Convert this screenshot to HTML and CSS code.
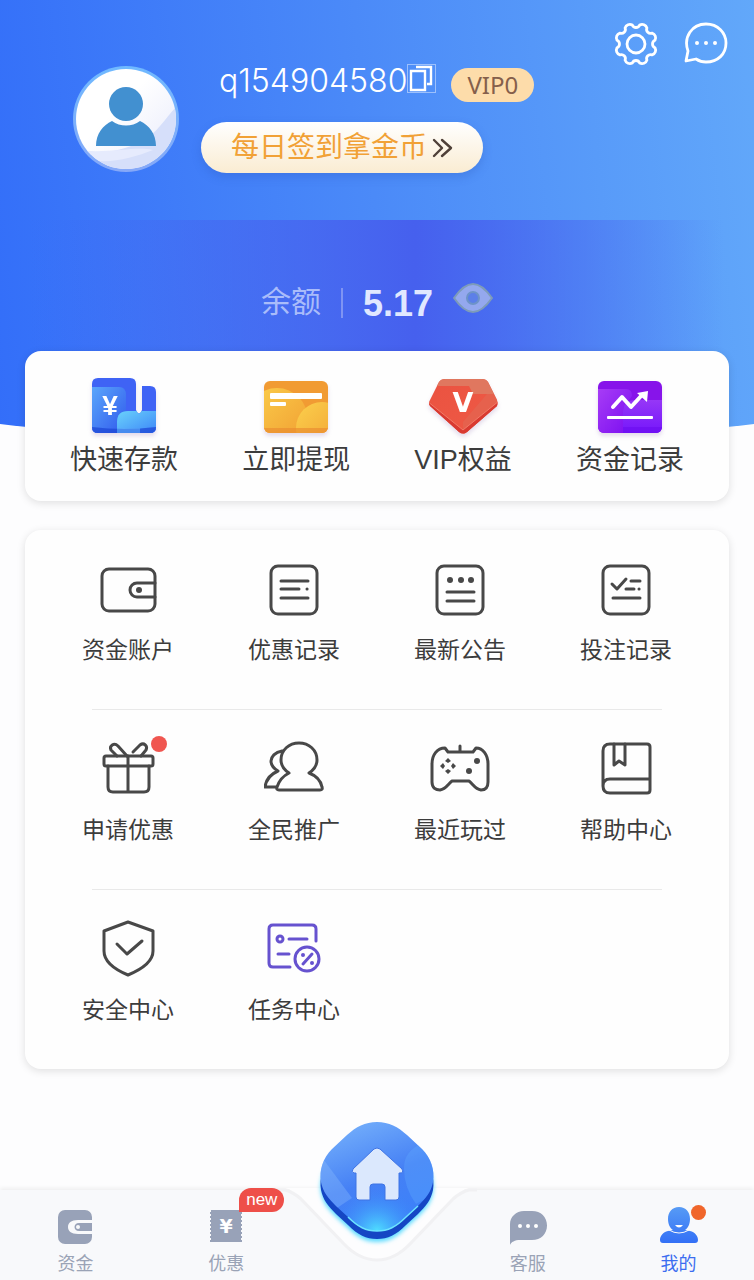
FILE: index.html
```html
<!DOCTYPE html>
<html lang="zh-CN">
<head>
    <meta charset="UTF-8">
    <meta name="viewport" content="width=device-width, initial-scale=1.0">
    <title>我的</title>
    <link rel="stylesheet" href="styles.css">
</head>
<body>
    <header class="header">
        <div class="profile">
            <svg class="avatar" viewBox="0 0 106 106" aria-hidden="true">
                <defs>
                    <linearGradient id="ring" x1="0" y1="0" x2="0" y2="1">
                        <stop offset="0" stop-color="#6fb9ff"/>
                        <stop offset="1" stop-color="#86a8f8"/>
                    </linearGradient>
                    <linearGradient id="face" x1="0" y1="0" x2="1" y2="1">
                        <stop offset="0.4" stop-color="#fff"/>
                        <stop offset="1" stop-color="#e6e9fb"/>
                    </linearGradient>
                    <clipPath id="round"><circle cx="53" cy="53" r="50"/></clipPath>
                </defs>
                <circle cx="53" cy="53" r="53" fill="url(#ring)"/>
                <circle cx="53" cy="53" r="50" fill="url(#face)"/>
                <g clip-path="url(#round)">
                    <path d="M0 84C30 90 50 84 68 76C86 66 92 52 106 38V106H0Z" fill="#d6dffa"/>
                    <path d="M0 84C40 88 60 80 80 84C60 92 30 100 14 92Z" fill="#e6ebfd"/>
                </g>
                <circle cx="53" cy="38" r="17" fill="#4290d0"/>
                <path d="M23 80C23 68 30 59 39 55C47 61 59 61 67 55C76 59 83 68 83 80Z" fill="#4290d0"/>
            </svg>
            <div class="info">
                <div class="user">
                    <span class="user-name">q154904580</span>
                    <button class="icon-btn" type="button" aria-label="复制">
                        <svg width="29" height="29" viewBox="0 0 29 29" fill="none" stroke="#fff">
                            <rect x="0.5" y="0.5" width="28" height="28" stroke="#9cc0fc"/>
                            <path d="M4 7H18V26H4ZM9 3H24V20H20" stroke-width="2.4"/>
                        </svg>
                    </button>
                    <span class="vip">VIP0</span>
                </div>
                <a class="sign" href="#">每日签到拿金币<svg width="22" height="22" viewBox="0 0 22 22" fill="none" stroke="#4f4038" stroke-width="2.4" stroke-linecap="round" stroke-linejoin="round"><path d="M3 3L11 11L3 19M11 3L20 11L11 19"/></svg></a>
            </div>
            <div class="actions">
                <button class="icon-btn" type="button" aria-label="设置">
                    <svg width="44" height="44" viewBox="-22 -22 44 44" fill="none" stroke="#fff" stroke-width="2.8" stroke-linejoin="round">
                        <path d="M19 3.7A5 5 0 0 1 16.1 10.9A4 4 0 0 0 10.9 16.1A5 5 0 0 1 3.7 19A4 4 0 0 0 -3.7 19A5 5 0 0 1 -10.9 16.1A4 4 0 0 0 -16.1 10.9A5 5 0 0 1 -19 3.7A4 4 0 0 0 -19 -3.7A5 5 0 0 1 -16.1 -10.9A4 4 0 0 0 -10.9 -16.1A5 5 0 0 1 -3.7 -19A4 4 0 0 0 3.7 -19A5 5 0 0 1 10.9 -16.1A4 4 0 0 0 16.1 -10.9A5 5 0 0 1 19 -3.7A4 4 0 0 0 19 3.7Z"/>
                        <circle r="9"/>
                    </svg>
                </button>
                <button class="icon-btn" type="button" aria-label="消息">
                    <svg width="44" height="44" viewBox="0 0 44 44" fill="none" stroke="#fff" stroke-width="2.8" stroke-linejoin="round">
                        <path d="M4 29C-1 15 8 2 22 2C34 2 42 11 42 21C42 32 34 40 22 40C18 40 15 39 12 37L2 39Z"/>
                        <g fill="#fff" stroke="none"><circle cx="13" cy="21" r="2"/><circle cx="22" cy="21" r="2"/><circle cx="31" cy="21" r="2"/></g>
                    </svg>
                </button>
            </div>
        </div>
        <div class="balance">
            <span class="balance-label">余额</span>
            <span class="balance-line"></span>
            <span class="balance-value">5.17</span>
            <button class="icon-btn eye" type="button" aria-label="显示余额">
                <svg width="40" height="30" viewBox="0 0 40 30">
                    <path d="M1 15C8 5 14 1 20 1S32 5 39 15C32 25 26 29 20 29S8 25 1 15Z" fill="#94a8ee" stroke="#7d9bb9" stroke-width="2"/>
                    <circle cx="20" cy="15" r="6" fill="#5c7fe8" stroke="#6d93c8" stroke-width="2"/>
                </svg>
            </button>
        </div>
    </header>

    <main>
        <nav class="card quick">
            <a class="quick-item" href="#">
                <svg width="72" height="64" viewBox="0 0 72 64">
                    <defs>
                        <linearGradient id="dep1" x1="0" y1="0" x2="1" y2="1"><stop offset="0" stop-color="#5aa6fb"/><stop offset="1" stop-color="#3058ec"/></linearGradient>
                        <linearGradient id="dep2" x1="0" y1="0" x2="1" y2="1"><stop offset="0" stop-color="#6ad2fb"/><stop offset="1" stop-color="#3b82f8"/></linearGradient>
                        <clipPath id="depc"><path d="M10 4H42Q48 4 48 10V36Q51 43 54 36V12H62Q68 12 68 18V53Q68 59 62 59H10Q4 59 4 53V10Q4 4 10 4Z"/></clipPath>
                    </defs>
                    <g clip-path="url(#depc)">
                        <rect width="72" height="64" fill="#3f63f5"/>
                        <path d="M4 13H31Q38 13 38 21V60H4Z" fill="url(#dep1)"/>
                        <path d="M29 60V48Q29 37 40 37H70V60Z" fill="url(#dep2)"/>
                        <path d="M4 53Q36 57 68 53V60H4Z" fill="#1d47d6" opacity="0.75"/>
                        <path d="M29 54H52V60H29Z" fill="#5aa8fa" opacity="0.6"/>
                    </g>
                    <text class="glyph yen" x="22" y="41">¥</text>
                </svg>
                快速存款
            </a>
            <a class="quick-item" href="#">
                <svg width="72" height="64" viewBox="0 0 72 64">
                    <defs>
                        <linearGradient id="car1" x1="0" y1="0" x2="1" y2="1"><stop offset="0" stop-color="#fbd04c"/><stop offset="1" stop-color="#f09a30"/></linearGradient>
                        <clipPath id="carc"><rect x="4" y="7" width="64" height="52" rx="6"/></clipPath>
                    </defs>
                    <g clip-path="url(#carc)">
                        <rect width="72" height="64" fill="#f19b33"/>
                        <ellipse cx="17" cy="46" rx="31" ry="32" fill="url(#car1)"/>
                        <circle cx="62" cy="54" r="26" fill="url(#car1)"/>
                        <path d="M4 54H68V60H4Z" fill="#ea8a30" opacity="0.65"/>
                    </g>
                    <rect x="10" y="19" width="52" height="6" rx="1" fill="#fff"/>
                    <rect x="10" y="28" width="16" height="4" rx="1" fill="#fff"/>
                </svg>
                立即提现
            </a>
            <a class="quick-item" href="#">
                <svg width="72" height="64" viewBox="0 0 72 64">
                    <defs>
                        <linearGradient id="gem1" x1="0" y1="0" x2="1" y2="1"><stop offset="0" stop-color="#ea5240"/><stop offset="1" stop-color="#ef5a46"/></linearGradient>
                        <clipPath id="gemc"><path d="M18 5H55Q59 5 61 8L70 26Q71 29 70 32L40 58Q36 61 32 58L3 32Q1 29 3 26L12 8Q14 5 18 5Z"/></clipPath>
                    </defs>
                    <g clip-path="url(#gemc)">
                        <rect width="72" height="64" fill="url(#gem1)"/>
                        <path d="M10 4H64L70 20H46L42 12H8Z" fill="#e0775f"/>
                        <path d="M36 48L60 20H70V32L36 62Z" fill="#e46450" opacity="0.8"/>
                        <path d="M0 27L36 56L72 27V64H0Z" fill="#d93a31"/>
                        <path d="M0 27L36 56L72 27" fill="none" stroke="#f27a68"/>
                    </g>
                    <text class="glyph gem" x="36" y="38">V</text>
                </svg>
                VIP权益
            </a>
            <a class="quick-item" href="#">
                <svg width="72" height="64" viewBox="0 0 72 64">
                    <defs>
                        <linearGradient id="rec1" x1="0" y1="0" x2="1" y2="1"><stop offset="0" stop-color="#a73cf6"/><stop offset="1" stop-color="#7a0df0"/></linearGradient>
                        <linearGradient id="rec2" x1="0" y1="0" x2="0" y2="1"><stop offset="0" stop-color="#9637f7"/><stop offset="1" stop-color="#7415fb"/></linearGradient>
                        <clipPath id="recc"><rect x="4" y="7" width="64" height="52" rx="6"/></clipPath>
                    </defs>
                    <g clip-path="url(#recc)">
                        <rect width="72" height="64" fill="#8714ea"/>
                        <path d="M4 15H32Q38 15 38 22L29 34V60H4Z" fill="url(#rec1)"/>
                        <path d="M29 60V38Q29 26 42 26H70V60Z" fill="url(#rec2)"/>
                        <path d="M29 53H68V60H29Z" fill="#6d0cf0" opacity="0.6"/>
                    </g>
                    <path d="M19 33L28 23L37 33L48 21" fill="none" stroke="#fff" stroke-width="4" stroke-linecap="round" stroke-linejoin="round"/>
                    <path d="M43 19L54 17L53 28Z" fill="#fff"/>
                    <rect x="13" y="42" width="46" height="3" rx="1" fill="#fff"/>
                </svg>
                资金记录
            </a>
        </nav>

        <nav class="card menu">
            <div class="menu-row">
                <a class="menu-item" href="#">
                    <svg class="line-icon" viewBox="0 0 60 60">
                        <rect x="4" y="9" width="53" height="42" rx="7"/>
                        <path d="M57 23H39A7 7 0 0 0 39 37H57"/>
                        <circle class="dot" cx="41" cy="30" r="3"/>
                    </svg>
                    资金账户
                </a>
                <a class="menu-item" href="#">
                    <svg class="line-icon" viewBox="0 0 60 60">
                        <rect x="7" y="6" width="46" height="48" rx="7"/>
                        <path d="M17 21H44M17 29H35M43 29H43.1M17 38H44"/>
                    </svg>
                    优惠记录
                </a>
                <a class="menu-item" href="#">
                    <svg class="line-icon" viewBox="0 0 60 60">
                        <rect x="7" y="6" width="46" height="48" rx="7"/>
                        <path d="M17 32H44M17 41H44"/>
                        <circle class="dot" cx="20" cy="20" r="3"/>
                        <circle class="dot" cx="31" cy="20" r="3"/>
                        <circle class="dot" cx="41" cy="20" r="3"/>
                    </svg>
                    最新公告
                </a>
                <a class="menu-item" href="#">
                    <svg class="line-icon" viewBox="0 0 60 60">
                        <rect x="7" y="6" width="46" height="48" rx="7"/>
                        <path d="M16 24L21 29L30 19M35 21H44M30 29H38M43 29H43.1M17 38H44"/>
                    </svg>
                    投注记录
                </a>
            </div>
            <hr class="menu-line">
            <div class="menu-row">
                <a class="menu-item" href="#">
                    <svg class="line-icon" viewBox="0 0 60 60">
                        <rect x="6" y="16" width="49" height="10" rx="2"/>
                        <path d="M10 26V47Q10 52 15 52H46Q51 52 51 47V26M30 16V52"/>
                        <path d="M29 16L20 6C16 2 11 6 13 10L19 16M35 12L42 5C46 2 50 6 48 10L43 16"/>
                    </svg>
                    <i class="menu-dot"></i>
                    申请优惠
                </a>
                <a class="menu-item" href="#">
                    <svg class="line-icon" viewBox="0 0 60 60">
                        <path d="M25 33C19 29 17 25 17 20C17 10 25 3 35 3S53 10 53 20C53 25 51 29 45 33C53 36 57 42 58 47Q59 50 56 50H15Q12 50 13 47C15 41 19 36 25 33Z"/>
                        <path d="M18 11C11 12 7 17 7 21C7 25 9 28 14 31C7 34 2 40 1 47H12"/>
                    </svg>
                    全民推广
                </a>
                <a class="menu-item" href="#">
                    <svg class="line-icon" viewBox="0 0 60 60">
                        <path d="M18 12L15 8C7 8 2 15 2 24V42C2 48 6 50 10 50C16 49 18 44 22 41H39C43 44 45 49 51 50C55 50 58 48 58 42V24C58 15 53 8 46 8L43 12ZM30 6V12"/>
                        <g class="dot"><path d="M18 18L21 21L18 23L15 21ZM18 34L21 31L18 29L15 31ZM10 26L13 23L15 26L13 29ZM26 26L23 23L21 26L23 29Z"/><circle cx="47" cy="21" r="3"/><circle cx="39" cy="31" r="3"/></g>
                    </svg>
                    最近玩过
                </a>
                <a class="menu-item" href="#">
                    <svg class="line-icon" viewBox="0 0 60 60">
                        <path d="M7 46V11Q7 4 14 4H51Q54 4 54 7V50Q54 53 51 53H14Q7 53 7 46Q7 39 14 39H54"/>
                        <path d="M18 4V25L23 21L29 25V4"/>
                    </svg>
                    帮助中心
                </a>
            </div>
            <hr class="menu-line">
            <div class="menu-row">
                <a class="menu-item" href="#">
                    <svg class="line-icon" viewBox="0 0 60 60">
                        <path d="M30 2L55 11V31C55 42 42 50 30 55C18 50 6 42 6 31V11Z"/>
                        <path d="M19 24L29 34L44 21"/>
                    </svg>
                    安全中心
                </a>
                <a class="menu-item" href="#">
                    <svg class="line-icon task" viewBox="0 0 60 60">
                        <path d="M52 21V9Q52 5 48 5H9Q5 5 5 9V43Q5 47 9 47H26M25 19H43M14 34H25M39 44L48 34"/>
                        <circle cx="16" cy="19" r="3"/>
                        <circle cx="43" cy="39" r="12"/>
                        <circle class="dot" cx="39" cy="35" r="2"/>
                        <circle class="dot" cx="48" cy="43" r="2"/>
                    </svg>
                    任务中心
                </a>
            </div>
        </nav>
    </main>

    <nav class="tabbar">
        <svg class="notch" width="200" height="80" viewBox="0 0 200 80">
            <path d="M0 0H8Q16 2 24 9L66 53Q82 72 100 72T134 53L176 9Q184 2 192 0H200Z" fill="#fdfdfe"/>
            <path d="M0 2H8Q16 4 24 11L66 55Q82 72 100 72T134 55L176 11Q184 4 192 2H200" fill="none" stroke="#f1f1f3" stroke-width="3"/>
        </svg>
        <a class="tab" href="#">
            <svg width="40" height="40" viewBox="0 0 40 40">
                <rect x="3" y="4" width="34" height="34" rx="7" fill="#98a2b8"/>
                <path d="M38 14H23C16 14 13 17 13 21S16 28 23 28H38V25H24C18 25 18 17 24 17H38Z" fill="#f8f9fb"/>
                <circle cx="23" cy="21" r="2" fill="#f8f9fb"/>
            </svg>
            资金
        </a>
        <a class="tab" href="#">
            <svg width="40" height="40" viewBox="0 0 40 40">
                <rect x="4" y="4" width="32" height="32" fill="#98a2b8"/>
                <path d="M4 4V36M36 4V36" stroke="#f8f9fb" stroke-width="2" stroke-dasharray="2 2"/>
                <text class="glyph coupon" x="20" y="27">¥</text>
            </svg>
            <span class="new">new</span>
            优惠
        </a>
        <a class="tab home" href="#" aria-label="首页">
            <svg width="130" height="136" viewBox="0 0 130 136">
                <defs>
                    <linearGradient id="home1" x1="0.2" y1="0" x2="0.6" y2="1">
                        <stop offset="0" stop-color="#75b0fb"/>
                        <stop offset="0.55" stop-color="#4580f5"/>
                        <stop offset="1" stop-color="#3b82fa"/>
                    </linearGradient>
                    <radialGradient id="home2" cx="0.5" cy="1" r="0.4">
                        <stop offset="0" stop-color="#4fe0ff"/>
                        <stop offset="1" stop-color="#3b82fa" stop-opacity="0"/>
                    </radialGradient>
                    <filter id="glow" x="-20%" y="-20%" width="140%" height="140%"><feGaussianBlur stdDeviation="2"/></filter>
                    <path id="base" d="M65 8C53 8 44 13 35 21L20 35C11 44 7 56 9 68C11 78 16 84 24 92L36 103C46 113 54 117 65 117S84 113 94 103L106 92C114 84 119 78 121 68C123 56 119 44 110 35L95 21C86 13 77 8 65 8Z"/>
                    <clipPath id="homec"><use href="#base"/></clipPath>
                </defs>
                <use href="#base" y="11" fill="#5fdcff" filter="url(#glow)"/>
                <use href="#base" y="8" fill="#1546c4"/>
                <use href="#base" fill="url(#home1)"/>
                <g clip-path="url(#homec)">
                    <path d="M0 30L40 84L22 96L0 80Z" fill="#8bbcfb" opacity="0.35"/>
                    <path d="M92 54C92 42 98 36 108 30L130 54V76L104 90Q92 74 92 54Z" fill="#62b0ff" opacity="0.3"/>
                    <use href="#base" fill="url(#home2)"/>
                </g>
                <path d="M36 103C46 113 54 117 65 117S84 113 94 103L106 92" fill="none" stroke="#6ce4ff" stroke-width="1.5"/>
                <path d="M62 35Q65 33 68 35L90 55Q92 59 88 59H87V83Q87 86 84 86H73V73Q73 70 70 70H61Q58 70 58 73V86H47Q44 86 44 83V59H42Q39 58 41 55Z" fill="#dbe8fd" stroke="#3f74e4" stroke-width="1"/>
            </svg>
        </a>
        <a class="tab" href="#">
            <svg width="40" height="40" viewBox="0 0 40 40">
                <path d="M16 5H24C33 5 39 11 39 19.5S33 34 24 34H12C7 34 3 36 2 39V18C2 11 8 5 16 5Z" fill="#98a2b8"/>
                <circle cx="12" cy="20" r="2" fill="#fff"/><circle cx="20" cy="20" r="2" fill="#fff"/><circle cx="28" cy="20" r="2" fill="#fff"/>
            </svg>
            客服
        </a>
        <a class="tab active" href="#">
            <svg width="40" height="40" viewBox="0 0 40 40">
                <defs>
                    <linearGradient id="me" x1="0" y1="0" x2="0" y2="1"><stop offset="0" stop-color="#579bf5"/><stop offset="1" stop-color="#3370f6"/></linearGradient>
                </defs>
                <path d="M20 1C27 1 31 6 31 13C31 18 29 22 26 24L31 25C36 26 39 30 39 34Q39 37 36 37H4Q1 37 1 34C1 30 4 26 9 25L14 24C11 22 9 18 9 13C9 6 13 1 20 1Z" fill="url(#me)"/>
                <path d="M10 24Q20 30 30 24" fill="none" stroke="#f8f9fb" stroke-width="1"/>
                <path d="M16 19H24Q20 24 16 19Z" fill="#fff"/>
            </svg>
            <i class="tab-dot"></i>
            我的
        </a>
    </nav>
</body>
</html>
```

FILE: styles.css
```css
* {
    box-sizing: border-box;
}
body {
    display: flex;
    flex-direction: column;
    min-height: 100vh;
    margin: 0;
    background: #fdfdfe;
    color: #3c3c3c;
    font-family: "Liberation Sans", "Noto Sans CJK SC", sans-serif;
}
a {
    color: inherit;
    text-decoration: none;
}
svg {
    display: block;
}
.icon-btn {
    padding: 0;
    border: none;
    background: none;
    cursor: pointer;
}

/* header */
.header {
    background: linear-gradient(84deg, #336ef9, #4b8af8 50%, #62a8fa);
    clip-path: ellipse(161% 100% at 50% 0);
}
.profile {
    display: flex;
    align-items: flex-start;
    height: 220px;
    padding: 22px 26px 0 73px;
}
.avatar {
    flex: none;
    width: 106px;
    height: 106px;
    margin-top: 44px;
}
.info {
    margin-top: 42px;
    margin-left: 22px;
}
.user {
    display: flex;
    align-items: flex-start;
    height: 38px;
    margin-bottom: 20px;
    padding-left: 18px;
}
.user-name {
    color: #fff;
    font-family: Inter, sans-serif;
    font-size: 32px;
    font-weight: 300;
    line-height: 34px;
}
.vip {
    align-self: flex-end;
    margin-left: 15px;
    padding: 0 16px;
    border-radius: 17px;
    background: #fddcaa;
    color: #855f4b;
    font-family: "Noto Sans", sans-serif;
    font-size: 24px;
    line-height: 34px;
}
.sign {
    display: inline-flex;
    align-items: center;
    gap: 4px;
    height: 51px;
    padding: 0 30px;
    border-radius: 26px;
    background: linear-gradient(#fff, #faecd2);
    box-shadow: 0 4px 10px rgba(40, 80, 180, 0.25);
    color: #f1a136;
    font-size: 28px;
    line-height: 48px;
    white-space: nowrap;
}
.actions {
    display: flex;
    gap: 26px;
    margin-left: auto;
}
.balance {
    display: flex;
    justify-content: center;
    gap: 20px;
    height: 226px;
    padding-top: 62px;
    background: linear-gradient(90deg, rgba(70, 96, 238, 0) 4%, #4660ee 55%, rgba(70, 96, 238, 0) 96%);
    line-height: 40px;
}
.balance-label {
    color: #a9bcfa;
    font-size: 30px;
}
.balance-line {
    width: 2px;
    height: 30px;
    margin-top: 6px;
    background: #7f94f3;
}
.balance-value {
    color: #e0e8ff;
    font-size: 36px;
    font-weight: bold;
    line-height: 44px;
}
.eye {
    height: 32px;
}

/* cards */
.card {
    margin: 0 25px;
    border-radius: 16px;
    background: #fefefe;
    box-shadow: 0 2px 8px rgba(0, 0, 0, 0.12);
}
.quick {
    position: relative;
    display: flex;
    justify-content: space-between;
    margin-top: -95px;
    padding: 23px 45px;
}
.quick-item {
    display: flex;
    flex-direction: column;
    align-items: center;
    gap: 4px;
    font-size: 27px;
    line-height: 36px;
}
.quick-item svg {
    filter: drop-shadow(0 3px 2px rgba(120, 80, 160, 0.2));
}
.glyph {
    fill: #fff;
    font-family: "DejaVu Sans", sans-serif;
    font-weight: bold;
    text-anchor: middle;
}
.yen {
    font-family: "Liberation Sans", sans-serif;
    font-size: 28px;
}
.gem {
    font-size: 27px;
}
.coupon {
    font-size: 19px;
}
.menu {
    margin-top: 29px;
    padding: 0 20px;
}
.menu-row {
    display: grid;
    grid-template-columns: repeat(4, 1fr);
}
.menu-item {
    position: relative;
    display: flex;
    flex-direction: column;
    align-items: center;
    gap: 12px;
    padding: 30px 0 41px;
    font-size: 23px;
    line-height: 36px;
}
.line-icon {
    width: 60px;
    height: 60px;
    fill: none;
    stroke: #484848;
    stroke-width: 3;
    stroke-linecap: round;
    stroke-linejoin: round;
}
.line-icon .dot {
    fill: #484848;
    stroke: none;
}
.line-icon.task {
    stroke: #6652cf;
}
.line-icon.task .dot {
    fill: #6652cf;
}
.menu-dot {
    position: absolute;
    top: 26px;
    left: calc(50% + 23px);
    width: 16px;
    height: 16px;
    border-radius: 50%;
    background: #f05650;
}
.menu-line {
    height: 1px;
    margin: 0 47px;
    border: none;
    background: #e9e9e9;
}

/* bottom tabs */
.tabbar {
    position: relative;
    display: grid;
    grid-template-columns: repeat(5, 1fr);
    height: 90px;
    margin-top: auto;
    background: #f8f9fb;
    box-shadow: 0 -2px 4px rgba(0, 0, 0, 0.06);
}
.notch {
    position: absolute;
    top: -2px;
    left: 50%;
    transform: translateX(-50%);
}
.tab {
    position: relative;
    display: flex;
    flex-direction: column;
    align-items: center;
    gap: 4px;
    padding-top: 16px;
    color: #9aa3b6;
    font-size: 18px;
    line-height: 28px;
}
.tab.active {
    color: #3c6df0;
}
.home {
    padding-top: 0;
}
.home svg {
    flex: none;
    margin-top: -76px;
}
.new {
    position: absolute;
    top: -2px;
    left: calc(50% + 13px);
    padding: 0 7px;
    border-radius: 12px 12px 12px 0;
    background: #ee4f49;
    color: #fff;
    font-size: 17px;
    line-height: 24px;
}
.tab-dot {
    position: absolute;
    top: 15px;
    left: calc(50% + 12px);
    width: 15px;
    height: 15px;
    border-radius: 50%;
    background: #f0662b;
}
```
